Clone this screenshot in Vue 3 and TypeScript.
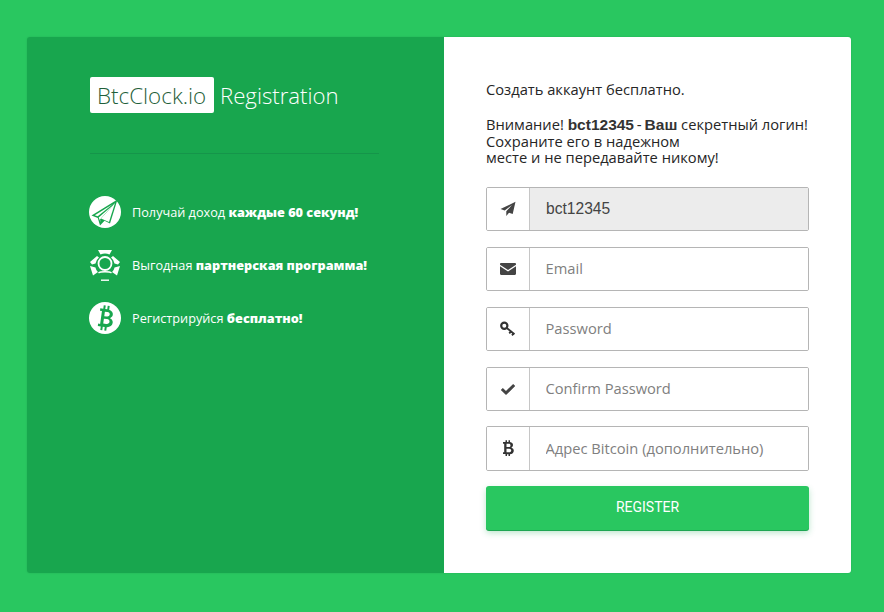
<script setup lang="ts">
const features = [
  { icon: 'plane', text: 'Получай доход ', bold: 'каждые 60 секунд!' },
  { icon: 'ref', text: 'Выгодная ', bold: 'партнерская программа!' },
  { icon: 'btc', text: 'Регистрируйся ', bold: 'бесплатно!' },
]
const fields = [
  { icon: 'plane', placeholder: '', value: 'bct12345', readonly: true },
  { icon: 'mail', placeholder: 'Email', value: '', readonly: false },
  { icon: 'key', placeholder: 'Password', value: '', readonly: false },
  { icon: 'check', placeholder: 'Confirm Password', value: '', readonly: false },
  { icon: 'btc', placeholder: 'Адрес Bitcoin (дополнительно)', value: '', readonly: false },
]
</script>

<template>
  <main class="page">
    <section class="card">
      <aside class="promo">
        <h1 class="brand"><span class="logo">BtcClock.io</span><span class="title">Registration</span></h1>
        <hr class="rule" />
        <ul class="features">
          <li v-for="f in features" :key="f.icon" class="feature">
            <svg class="feature-icon" viewBox="0 0 32 32" aria-hidden="true">
              <template v-if="f.icon === 'plane'">
                <circle cx="16" cy="16" r="16" fill="#fff" />
                <path d="M28.500 3.500 2.500 19.500l6.300 2.600L11 29.500l4.500-4.700 5.500 2.700z" fill="#18a64e" />
                <path d="M8.700 20.300 5.800 19.300 24 8z" fill="#fff" />
                <path d="M12 22.500 20 26 26 7z" fill="#fff" />
                <path d="M9.700 21.500 23 10 11 23.500l.7 3z" fill="#fff" />
              </template>
              <template v-else-if="f.icon === 'ref'">
                <circle cx="16" cy="14.500" r="6.500" fill="none" stroke="#fff" stroke-width="1.800" />
                <path d="M9 1h14l-2.500 4.500a11 11 0 0 0-9 0z" fill="#fff" />
                <path d="M8 7 1 13l2 2.500 3.500-1a10 10 0 0 1 3.500-6z" fill="#fff" />
                <path d="M24 7l7 6-2 2.500-3.500-1a10 10 0 0 0-3.500-6z" fill="#fff" />
                <path d="M1 17l5.500 1.500c.5 2 1.500 3.500 2.500 4.500l-5 3.500z" fill="#fff" />
                <path d="M31 17l-5.500 1.500c-.5 2-1.500 3.500-2.500 4.500l5 3.500z" fill="#fff" />
                <path d="M9.500 24c2-1.700 11-1.700 13 0" fill="none" stroke="#fff" stroke-width="1.400" />
                <path d="M12 31.200h8" stroke="#fff" stroke-width="1.400" />
              </template>
              <template v-else>
                <circle cx="16" cy="16" r="16" fill="#fff" />
                <g transform="rotate(8 16 16)">
                  <path d="M10 7h3V3.500h2V7h2V3.500h2v3.800c3 .7 4.300 2.400 4.300 4.500 0 1.700-.9 3-2.400 3.700 2.200.6 3.400 2.200 3.400 4.200 0 3-2.300 4.800-5.300 5.100v3.700h-2V25h-2v3.500h-2V25h-3v-2.500h2v-13h-2z" fill="#18a64e" />
                  <path d="M15 9.800h2.500c1.700 0 2.700.8 2.700 2.200s-1 2.300-2.700 2.300H15zM15 16.800h3c1.900 0 3 .9 3 2.400s-1.100 2.500-3 2.500h-3z" fill="#fff" />
                </g>
              </template>
            </svg>
            <span class="feature-text">{{ f.text }}<b>{{ f.bold }}</b></span>
          </li>
        </ul>
      </aside>

      <div class="panel">
        <p class="lead">Создать аккаунт бесплатно.</p>
        <p class="notice">
          Внимание! <b class="arial">bct12345</b> <span class="dash">-</span> <b class="arial">Ваш</b> секретный логин!<br />
          Сохраните его в надежном<br />
          месте и не передавайте никому!
        </p>
        <form class="form" @submit.prevent>
          <label v-for="field in fields" :key="field.icon" class="field">
            <span class="addon">
              <svg v-if="field.icon === 'plane'" class="addon-icon" viewBox="0 0 16 16" aria-hidden="true">
                <path d="M15.500 .8 .5 8l4.200 1.500L12 4 6.300 10.300V15l2.700-3.200 3.700 1.300z" fill="#444" />
              </svg>
              <svg v-else-if="field.icon === 'mail'" class="addon-icon" viewBox="0 0 16 12" aria-hidden="true">
                <path d="M0 1.200C0 .5.500 0 1.200 0h13.600c.7 0 1.200.5 1.200 1.200v.5L8 7 0 1.700z" fill="#444" />
                <path d="M0 3.200 8 8.500l8-5.300v7.600c0 .7-.5 1.200-1.200 1.200H1.200C.5 12 0 11.500 0 10.800z" fill="#444" />
              </svg>
              <svg v-else-if="field.icon === 'key'" class="addon-icon" viewBox="0 0 16 16" aria-hidden="true">
                <circle cx="4.300" cy="4.800" r="3.100" fill="none" stroke="#333" stroke-width="2.200" />
                <path d="M6.800 7l7.700 6.300M11 10.500l-1.800 1.800M13.500 12.500l-1.500 1.800" fill="none" stroke="#333" stroke-width="1.900" />
              </svg>
              <svg v-else-if="field.icon === 'check'" class="addon-icon" viewBox="0 0 16 16" aria-hidden="true">
                <path d="M1.800 8 6 12 14.200 4" fill="none" stroke="#444" stroke-width="3" />
              </svg>
              <svg v-else class="addon-icon" viewBox="0 0 16 16" aria-hidden="true">
                <path fill-rule="evenodd" d="M3 2h2.500V.3h1.500V2h1.500V.3H10v1.800c2 .3 3 1.500 3 3 0 1.200-.6 2.100-1.700 2.600 1.600.4 2.500 1.500 2.500 3 0 2-1.500 3.300-3.800 3.500v1.800H8.500v-1.700H7v1.700H5.500V14H3v-1.700h1.200V3.700H3zM6.500 3.800v3.200h2.300c1 0 1.700-.6 1.700-1.600s-.7-1.600-1.700-1.600zM6.500 8.700v3.600h2.700c1.200 0 2-.7 2-1.800s-.8-1.800-2-1.800z" fill="#333" />
              </svg>
            </span>
            <input
              class="control"
              :class="{ locked: field.readonly }"
              :placeholder="field.placeholder"
              :value="field.value"
              :readonly="field.readonly"
            />
          </label>
          <button class="submit" type="submit">REGISTER</button>
        </form>
      </div>
    </section>
  </main>
</template>

<style>
html, body { margin: 0; background: #29c760; }
</style>

<style scoped>
.page {
  box-sizing: border-box;
  height: 612px;
  padding: 37px 33px 39px 27px;
  background: #29c760;
  font-family: "Open Sans", sans-serif;
}
.card {
  display: flex;
  height: 100%;
  border-radius: 3px;
  overflow: hidden;
  box-shadow: 0 0 2px rgba(0, 0, 0, .12);
}
.promo {
  box-sizing: border-box;
  width: 417px;
  padding: 40px 65px 0 63px;
  background: #18a64e;
  color: #fff;
}
.brand {
  display: flex;
  align-items: center;
  height: 36px;
  margin: 0;
  font-weight: 300;
}
.logo {
  width: 124px;
  box-sizing: border-box;
  padding: 1px 0 0 7px;
  line-height: 35px;
  border-radius: 2px;
  background: #fff;
  color: #1f5f3a;
  font-size: 22.400px;
}
.title { padding-top: 1px; margin-left: 6px; line-height: 35px; font-size: 22.200px; }
.rule {
  margin: 40px 0 0;
  border: 0;
  border-top: 1px solid #15954a;
}
.features {
  display: flex;
  flex-direction: column;
  gap: 21px;
  margin: 42px 0 0;
  padding: 0;
  list-style: none;
}
.feature {
  display: flex;
  align-items: center;
  gap: 11px;
  height: 32px;
  font-size: 12.700px;
  white-space: nowrap;
}
.feature b { font-weight: 800; }
.feature-icon { width: 32px; height: 32px; flex: none; margin-left: -1px; }
.panel {
  box-sizing: border-box;
  flex: 1;
  padding: 43px 42px 0;
  background: #fff;
  color: #262626;
  font-size: 14.700px;
}
.lead { margin: 0; line-height: 19px; }
.notice { margin: 17px 0 0; line-height: 16.400px; white-space: nowrap; }
.arial { font-family: "Liberation Sans", sans-serif; font-weight: 700; font-size: 15.500px; line-height: 1; color: #333; }
.dash { font-family: "Liberation Sans", sans-serif; margin: 0 -1px; line-height: 1; }
.form {
  display: flex;
  flex-direction: column;
  gap: 16px;
  margin-top: 21px;
}
.field {
  display: flex;
  box-sizing: border-box;
  height: 44px;
  border: 1px solid #b5b5b5;
  border-radius: 2px;
  overflow: hidden;
}
.field:last-of-type { height: 45px; margin-top: -1px; }
.addon {
  display: flex;
  flex: none;
  align-items: center;
  justify-content: center;
  width: 42px;
  border-right: 1px solid #c6c6c6;
  background: #fff;
}
.addon-icon { width: 16px; height: 16px; }
.control {
  flex: 1;
  min-width: 0;
  box-sizing: border-box;
  padding: 0 15.500px 1px;
  border: 0;
  outline: 0;
  background: #fff;
  color: #444;
  font: 14.700px "Open Sans", sans-serif;
}
.control::placeholder { color: #808080; opacity: 1; }
.locked {
  padding: 1px 16px 0;
  background: #ececec;
  font: 15.600px "Liberation Sans", sans-serif;
}
.submit {
  height: 44px;
  margin-top: -1px;
  padding-bottom: 2px;
  border: 0;
  border-radius: 3px;
  background: #29c760;
  box-shadow: 0 1px 0 #1ea552, 0 3px 6px rgba(30, 170, 85, .3);
  color: #fff;
  font: 14px Roboto, sans-serif;
}
</style>
